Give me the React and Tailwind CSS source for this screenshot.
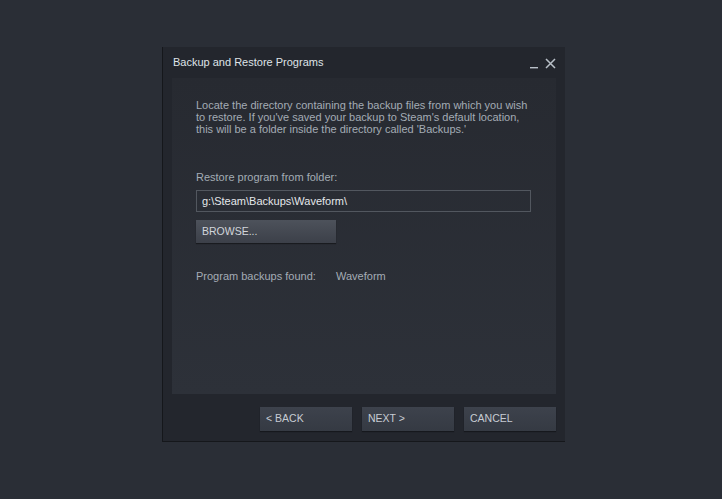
import React from 'react';

const font = { fontFamily: '"Liberation Sans", Arial, sans-serif' };

const FooterButton = ({ children }) => (
  <button className="w-[92px] h-[24px] px-[6px] text-left text-[10.5px] text-[#c7ccd3] bg-gradient-to-b from-[#3d424c] to-[#353a43] shadow-[0_1px_1px_rgba(0,0,0,0.35)]">
    {children}
  </button>
);

export default function App() {
  return (
    <div className="w-[722px] h-[499px] bg-[#2a2e36] pt-[47px] pl-[162px]" style={font}>
      {/* Window */}
      <div className="w-[403px] h-[395px] bg-[#23262d] flex flex-col border-l border-b border-[#15171b]">
        {/* Title bar */}
        <div className="h-[31px] flex items-center justify-between pl-[10px] pr-[9px]">
          <span className="text-[11px] text-[#dfe3e8]">Backup and Restore Programs</span>
          <div className="flex items-center gap-[6px] pt-[2px]">
            <svg width="9" height="10" viewBox="0 0 9 10">
              <rect x="0" y="8" width="8" height="1.4" fill="#b9c0c8" />
            </svg>
            <svg width="11" height="11" viewBox="0 0 11 11">
              <path d="M1 1 L10 10 M10 1 L1 10" stroke="#b9c0c8" strokeWidth="1.5" />
            </svg>
          </div>
        </div>

        {/* Content panel */}
        <div className="ml-[9px] mr-[9px] h-[316px] bg-gradient-to-b from-[#272a31] to-[#2d3139] pl-[24px] pr-[25px] pt-[21px]">
          <p className="text-[11px] leading-[12px] text-[#a4acb5]">
            Locate the directory containing the backup files from which you wish to restore. If you've saved your backup to Steam's default location, this will be a folder inside the directory called 'Backups.'
          </p>

          <div className="mt-[36px] text-[11px] leading-[12px] text-[#a4acb5]">Restore program from folder:</div>

          <div className="mt-[7px] w-[335px] h-[22px] border border-[#52575f] flex items-center px-[5px] text-[11px] text-[#e4e7ea]">
            g:\Steam\Backups\Waveform\
          </div>

          <button className="mt-[8px] w-[140px] h-[23px] px-[6px] text-left text-[10.5px] text-[#d2d6db] bg-gradient-to-b from-[#4d525b] to-[#3c4049] shadow-[0_1px_1px_rgba(0,0,0,0.4)]">
            BROWSE...
          </button>

          <div className="mt-[27px] flex text-[11px] leading-[12px] text-[#a4acb5]">
            <span className="w-[140px]">Program backups found:</span>
            <span>Waveform</span>
          </div>
        </div>

        {/* Footer */}
        <div className="flex justify-end gap-[10px] pr-[9px] pt-[13px]">
          <FooterButton>&lt; BACK</FooterButton>
          <FooterButton>NEXT &gt;</FooterButton>
          <FooterButton>CANCEL</FooterButton>
        </div>
      </div>
    </div>
  );
}
